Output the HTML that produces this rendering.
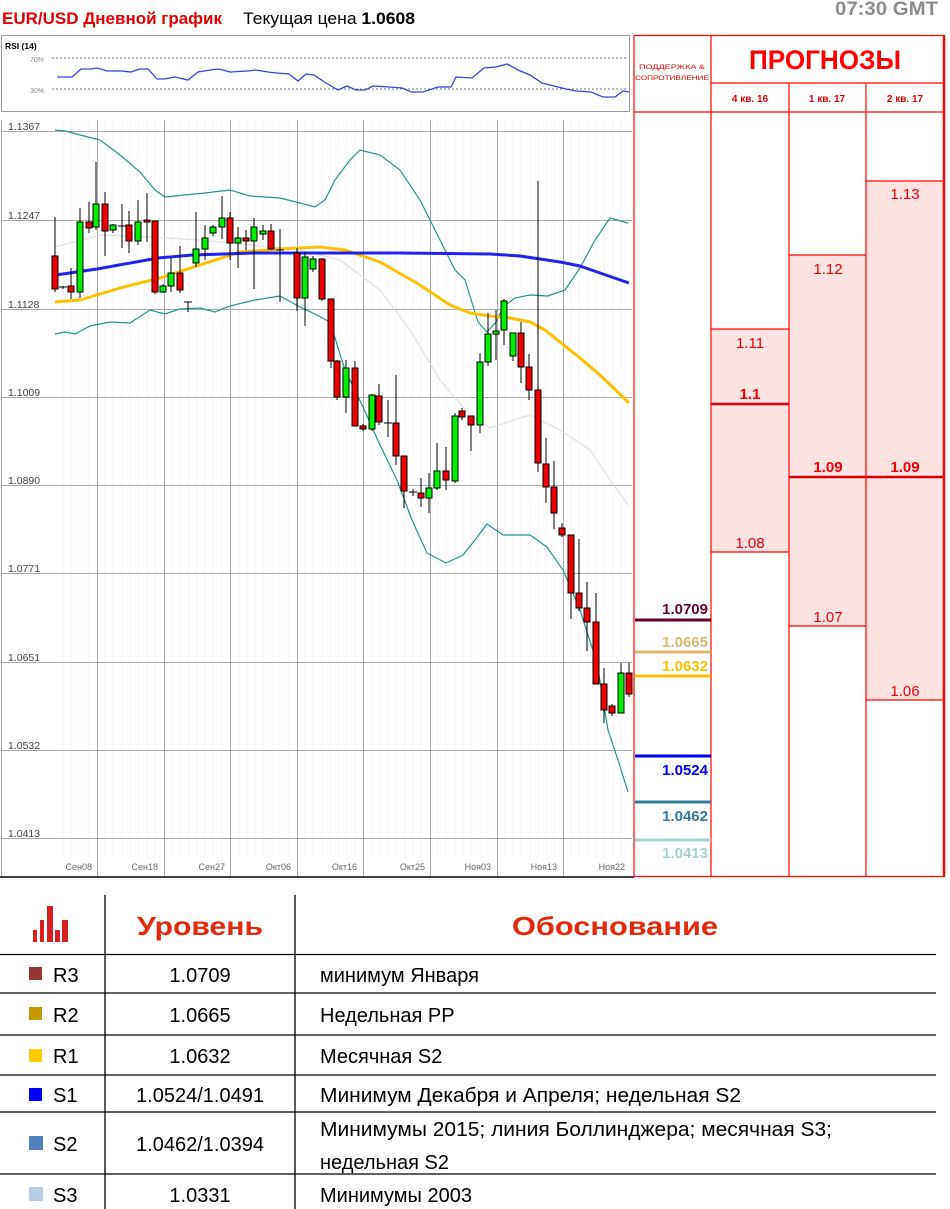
<!DOCTYPE html>
<html><head><meta charset="utf-8"><style>
html,body{margin:0;padding:0;background:#fff;width:950px;height:1209px;overflow:hidden}
svg{display:block}
text{font-family:"Liberation Sans",sans-serif}
</style></head><body>
<svg width="950" height="1209" viewBox="0 0 950 1209" xmlns="http://www.w3.org/2000/svg">
<!-- header -->
<text x="2" y="24" font-size="17" font-weight="bold" fill="#e00000" textLength="220" lengthAdjust="spacingAndGlyphs">EUR/USD Дневной график</text>
<text x="243" y="24" font-size="17" fill="#000" textLength="172" lengthAdjust="spacingAndGlyphs">Текущая цена <tspan font-weight="bold">1.0608</tspan></text>
<text x="835" y="15" font-size="19" font-weight="bold" fill="#8c8c8c" textLength="103" lengthAdjust="spacingAndGlyphs">07:30 GMT</text>

<!-- RSI -->
<rect x="1.5" y="35.5" width="628" height="76" fill="#fff" stroke="#999"/>
<text x="5" y="49" font-size="8.5" font-weight="bold" fill="#000">RSI (14)</text>
<text x="30" y="62" font-size="7" fill="#888">70%</text>
<text x="30" y="93" font-size="7" fill="#888">30%</text>
<line x1="52" y1="58" x2="628" y2="58" stroke="#777" stroke-dasharray="2,2"/>
<line x1="52" y1="89" x2="628" y2="89" stroke="#777" stroke-dasharray="2,2"/>
<polyline fill="none" stroke="#3344dd" stroke-width="1.3" points="57,77 72,77 81,69 91,69 97,68 107,71 122,71 131,72 140,69 148,69 157,79 164,79 175,77 188,80 198,72 210,70 219,69 230,72 247,71 256,70 268,72 277,73 289,74 298,81 306,74 314,75 326,83 338,90 347,86 356,90 365,90 373,86 389,87 402,88 411,92 423,92 438,87 451,87 456,77 472,78 484,68 496,67 507,64 518,70 530,75 542,83 554,86 566,89 576,91 591,92 603,97 615,97 623,91 629,92"/>

<!-- main chart grid -->
<g stroke="#f6f6f6" stroke-width="1">
<path d="M63 120V858M71 120V858M80 120V858M89 120V858M105 120V858M113 120V858M122 120V858M130 120V858M138 120V858M147 120V858M155 120V858M172 120V858M180 120V858M189 120V858M197 120V858M205 120V858M213 120V858M222 120V858M239 120V858M247 120V858M255 120V858M263 120V858M272 120V858M280 120V858M289 120V858M305 120V858M313 120V858M322 120V858M330 120V858M338 120V858M346 120V858M355 120V858M372 120V858M380 120V858M388 120V858M396 120V858M405 120V858M413 120V858M421 120V858M438 120V858M446 120V858M455 120V858M463 120V858M471 120V858M480 120V858M488 120V858M505 120V858M513 120V858M521 120V858M530 120V858M538 120V858M546 120V858M554 120V858M571 120V858M579 120V858M588 120V858M596 120V858M604 120V858M613 120V858M621 120V858"/>
</g>
<g stroke="#aaa" stroke-width="1">
<path d="M1 131.5H632M1 220.5H632M1 309.5H632M1 397.5H632M1 485.5H632M1 573.5H632M1 662.5H632M1 750.5H632M1 838.5H632"/>
<path d="M97.5 120V877M164.5 120V877M230.5 120V877M297.5 120V877M363.5 120V877M430.5 120V877M497.5 120V877M563.5 120V877"/>
<path d="M1.5 120V877"/>
</g>
<g font-size="10.5" fill="#444">
<text x="8" y="130">1.1367</text><text x="8" y="219">1.1247</text><text x="8" y="308">1.1128</text><text x="8" y="396">1.1009</text><text x="8" y="484">1.0890</text><text x="8" y="572">1.0771</text><text x="8" y="661">1.0651</text><text x="8" y="749">1.0532</text><text x="8" y="837">1.0413</text>
</g>
<g font-size="9" fill="#666" text-anchor="end">
<text x="92" y="870">Сен08</text><text x="158" y="870">Сен18</text><text x="225" y="870">Сен27</text><text x="291" y="870">Окт06</text><text x="357" y="870">Окт16</text><text x="425" y="870">Окт25</text><text x="491" y="870">Ноя03</text><text x="557" y="870">Ноя13</text><text x="625" y="870">Ноя22</text>
</g>
<line x1="0" y1="877" x2="634" y2="877" stroke="#000" stroke-width="1.5"/>

<!-- indicator lines -->
<polyline fill="none" stroke="#e2e2e2" stroke-width="1.3" points="55,247 100,235 150,237 200,240 250,245 300,250 340,260 380,290 410,330 440,380 470,415 490,428 520,418 530,415 560,430 590,450 610,480 628,505"/>
<polyline fill="none" stroke="#2a9090" stroke-width="1.2" points="55,130 65,131 80,135 100,140 120,155 140,172 155,190 165,197 205,193 230,190 250,196 280,198 300,203 315,207 325,200 335,180 350,160 360,150 380,155 400,170 420,200 440,240 455,270 465,280 478,322 487,332 496,322 503,307 515,298 530,295 548,296 565,290 580,268 595,240 610,218 628,223"/>
<polyline fill="none" stroke="#2a9090" stroke-width="1.2" points="55,334 65,332 75,334 90,326 110,322 130,323 150,310 165,314 180,309 200,308 215,312 230,306 255,300 280,296 300,307 315,314 330,322 345,370 363,407 380,445 397,480 412,520 427,553 446,563 463,555 475,540 487,524 503,535 530,535 547,547 563,570 580,610 597,663 608,730 618,760 628,792"/>
<polyline fill="none" stroke="#ffc000" stroke-width="3" stroke-linejoin="round" points="55,302 80,300 100,294 120,288 160,278 200,265 240,252 280,249 320,247 345,250 380,262 420,285 450,305 470,313 490,316 510,318 530,322 545,330 560,342 580,358 600,375 629,403"/>
<polyline fill="none" stroke="#2222ee" stroke-width="3" stroke-linejoin="round" points="56,275 97,269 158,258 193,255 253,253 340,253 400,253 490,254 520,256 560,262 580,266 600,273 629,283"/>

<!-- candles wicks -->
<path stroke="#000" stroke-width="1" fill="none" d="M55 217V292M63 286V289M71 268V299M80 208V298M89 202V233M96 162V230M105 192V256M113 224V233M122 204V248M129 211V253M138 200V245M147 193V242M155 221V294M163 284V293M171 258V292M180 246V293M188 302V312M196 212V267M205 225V260M213 225V236M222 196V239M230 212V260M238 227V268M246 230V250M254 218V289M263 225V240M271 224V250M280 229V302M297 248V311M305 252V326M313 256V272M322 258V301M331 299V368M337 360V400M346 360V413M355 361V426M363 424V431M372 394V431M379 384V425M388 400V437M396 375V465M404 456V508M413 489V496M421 478V507M429 473V513M437 443V490M446 447V490M455 413V483M462 408V420M471 416V451M480 353V433M488 313V366M496 310V360M504 299V345M513 333V361M521 322V383M529 354V400M538 181V472M546 438V503M554 461V529M562 523V537M571 535V619M579 539V611M587 582V651M596 593V684M604 668V723M612 704V716M621 663V713M629 663V697M184 302H192M409 492H417M118 226H126M59 287H67M276 250H284M384 423H392"/>
<!-- bodies -->
<g stroke="#000" stroke-width="1">
<g fill="#ee0000">
<rect x="52" y="256" width="6" height="33"/><rect x="68" y="286" width="6" height="6"/><rect x="86" y="222" width="6" height="6"/><rect x="102" y="204" width="6" height="27"/><rect x="126" y="225" width="6" height="16"/><rect x="144" y="220" width="6" height="2"/><rect x="152" y="221" width="6" height="71"/><rect x="177" y="273" width="6" height="17"/><rect x="227" y="218" width="6" height="25"/><rect x="243" y="238" width="6" height="3"/><rect x="268" y="231" width="6" height="18"/><rect x="294" y="253" width="6" height="45"/><rect x="319" y="259" width="6" height="40"/><rect x="328" y="299" width="6" height="62"/><rect x="334" y="361" width="6" height="36"/><rect x="352" y="368" width="6" height="58"/><rect x="360" y="426" width="6" height="3"/><rect x="376" y="396" width="6" height="26"/><rect x="393" y="423" width="6" height="33"/><rect x="401" y="456" width="6" height="35"/><rect x="418" y="493" width="6" height="5"/><rect x="443" y="471" width="6" height="9"/><rect x="459" y="411" width="6" height="6"/><rect x="468" y="416" width="6" height="9"/><rect x="518" y="333" width="6" height="34"/><rect x="526" y="367" width="6" height="23"/><rect x="535" y="390" width="6" height="73"/><rect x="543" y="464" width="6" height="23"/><rect x="551" y="487" width="6" height="26"/><rect x="559" y="528" width="6" height="7"/><rect x="568" y="535" width="6" height="58"/><rect x="576" y="593" width="6" height="15"/><rect x="584" y="608" width="6" height="14"/><rect x="593" y="622" width="6" height="62"/><rect x="601" y="684" width="6" height="26"/><rect x="609" y="706" width="6" height="7"/><rect x="626" y="673" width="6" height="21"/>
</g>
<g fill="#00ee00">
<rect x="77" y="222" width="6" height="70"/><rect x="93" y="204" width="6" height="23"/><rect x="110" y="225" width="6" height="5"/><rect x="135" y="222" width="6" height="19"/><rect x="160" y="286" width="6" height="6"/><rect x="168" y="273" width="6" height="13"/><rect x="193" y="249" width="6" height="14"/><rect x="202" y="238" width="6" height="11"/><rect x="210" y="227" width="6" height="6"/><rect x="219" y="218" width="6" height="9"/><rect x="235" y="238" width="6" height="5"/><rect x="251" y="227" width="6" height="14"/><rect x="260" y="231" width="6" height="3"/><rect x="302" y="257" width="6" height="41"/><rect x="310" y="259" width="6" height="10"/><rect x="343" y="368" width="6" height="29"/><rect x="369" y="395" width="6" height="34"/><rect x="426" y="488" width="6" height="10"/><rect x="434" y="471" width="6" height="17"/><rect x="452" y="416" width="6" height="65"/><rect x="477" y="362" width="6" height="63"/><rect x="485" y="334" width="6" height="28"/><rect x="493" y="331" width="6" height="3"/><rect x="501" y="301" width="6" height="29"/><rect x="510" y="333" width="6" height="23"/><rect x="618" y="673" width="6" height="40"/>
</g>
</g>

<!-- right forecast panel -->
<rect x="789" y="255" width="77" height="371" fill="#ffe3e3"/>
<rect x="711" y="329" width="78" height="223" fill="#ffe3e3"/>
<rect x="866" y="181" width="78" height="519" fill="#ffe3e3"/>
<g stroke="#ff0000" stroke-width="1.2" fill="none">
<rect x="634" y="35.5" width="310" height="841"/>
<line x1="711" y1="35" x2="711" y2="877"/>
<line x1="711" y1="83" x2="944" y2="83"/>
<line x1="634" y1="112" x2="944" y2="112"/>
<line x1="789" y1="83" x2="789" y2="877"/>
<line x1="866" y1="83" x2="866" y2="877"/>
<line x1="711" y1="329" x2="789" y2="329"/>
<line x1="711" y1="552" x2="789" y2="552"/>
<line x1="789" y1="255" x2="866" y2="255"/>
<line x1="789" y1="626" x2="866" y2="626"/>
<line x1="866" y1="181" x2="944" y2="181"/>
<line x1="866" y1="700" x2="944" y2="700"/>
</g>
<line x1="711" y1="404" x2="789" y2="404" stroke="#dd0000" stroke-width="2.5"/>
<line x1="789" y1="477" x2="944" y2="477" stroke="#dd0000" stroke-width="2.5"/>
<line x1="944" y1="35" x2="944" y2="877" stroke="#ff0000" stroke-width="2.5"/>
<text x="672" y="69" font-size="6.5" fill="#e00000" text-anchor="middle" textLength="66" lengthAdjust="spacingAndGlyphs">ПОДДЕРЖКА &amp;</text>
<text x="672" y="80" font-size="6.5" fill="#e00000" text-anchor="middle" textLength="74" lengthAdjust="spacingAndGlyphs">СОПРОТИВЛЕНИЕ</text>
<text x="749" y="69" font-size="27" font-weight="bold" fill="#ff0000" textLength="152" lengthAdjust="spacingAndGlyphs">ПРОГНОЗЫ</text>
<g font-size="10" fill="#e00000" text-anchor="middle" font-weight="bold">
<text x="750" y="102">4 кв. 16</text><text x="827" y="102">1 кв. 17</text><text x="905" y="102">2 кв. 17</text>
</g>
<g font-size="15" fill="#ee0000" text-anchor="middle">
<text x="750" y="348">1.11</text><text x="750" y="399" font-weight="bold">1.1</text><text x="750" y="548">1.08</text>
<text x="828" y="274">1.12</text><text x="828" y="472" font-weight="bold">1.09</text><text x="828" y="622">1.07</text>
<text x="905" y="199">1.13</text><text x="905" y="472" font-weight="bold">1.09</text><text x="905" y="696">1.06</text>
</g>
<!-- S/R levels -->
<g stroke-width="3">
<line x1="635" y1="620" x2="711" y2="620" stroke="#660033"/>
<line x1="635" y1="652" x2="711" y2="652" stroke="#d9b870"/>
<line x1="635" y1="676" x2="711" y2="676" stroke="#ffc000"/>
<line x1="635" y1="756" x2="711" y2="756" stroke="#0000ff"/>
<line x1="635" y1="802" x2="711" y2="802" stroke="#31799f"/>
<line x1="635" y1="840" x2="711" y2="840" stroke="#a8d0d0"/>
</g>
<g font-size="15" font-weight="bold" text-anchor="end">
<text x="708" y="614" fill="#660033">1.0709</text>
<text x="708" y="647" fill="#d9b870">1.0665</text>
<text x="708" y="671" fill="#ffc000">1.0632</text>
<text x="708" y="775" fill="#0000ff">1.0524</text>
<text x="708" y="821" fill="#31799f">1.0462</text>
<text x="708" y="858" fill="#a8d0d0">1.0413</text>
</g>

<!-- table -->
<g fill="#d92020">
<rect x="33" y="930" width="4" height="12"/><rect x="40" y="920" width="4" height="22"/><rect x="47" y="906" width="6" height="36"/><rect x="55" y="930" width="5" height="12"/><rect x="62" y="920" width="6" height="22"/>
</g>
<g stroke="#000" stroke-width="1.3">
<line x1="105" y1="895" x2="105" y2="1209"/>
<line x1="295" y1="895" x2="295" y2="1209"/>
<line x1="0" y1="954.5" x2="936" y2="954.5"/>
<line x1="0" y1="993" x2="936" y2="993"/>
<line x1="0" y1="1035" x2="936" y2="1035"/>
<line x1="0" y1="1075" x2="936" y2="1075"/>
<line x1="0" y1="1112" x2="936" y2="1112"/>
<line x1="0" y1="1174" x2="936" y2="1174"/>
</g>
<text x="200" y="935" font-size="26" font-weight="bold" fill="#e02a0a" text-anchor="middle" textLength="126" lengthAdjust="spacingAndGlyphs">Уровень</text>
<text x="615" y="935" font-size="26" font-weight="bold" fill="#e02a0a" text-anchor="middle" textLength="206" lengthAdjust="spacingAndGlyphs">Обоснование</text>
<rect x="29" y="967" width="13" height="13" fill="#943634"/>
<rect x="29" y="1007" width="13" height="13" fill="#c49a00"/>
<rect x="29" y="1049" width="13" height="13" fill="#ffcc00"/>
<rect x="29" y="1088" width="13" height="13" fill="#0000ff"/>
<rect x="29" y="1136" width="14" height="14" fill="#4f81bd"/>
<rect x="29" y="1187" width="14" height="14" fill="#b8cce4"/>
<g font-size="20" fill="#000">
<text x="53" y="982">R3</text><text x="53" y="1022">R2</text><text x="53" y="1063">R1</text><text x="53" y="1102">S1</text><text x="53" y="1151">S2</text><text x="53" y="1202">S3</text>
</g>
<g font-size="20" fill="#000" text-anchor="middle">
<text x="200" y="982">1.0709</text><text x="200" y="1022">1.0665</text><text x="200" y="1063">1.0632</text><text x="200" y="1102">1.0524/1.0491</text><text x="200" y="1151">1.0462/1.0394</text><text x="200" y="1202">1.0331</text>
</g>
<g font-size="20" fill="#000">
<text x="320" y="982">минимум Января</text>
<text x="320" y="1022">Недельная PP</text>
<text x="320" y="1063">Месячная S2</text>
<text x="320" y="1102" textLength="421" lengthAdjust="spacingAndGlyphs">Минимум Декабря и Апреля; недельная S2</text>
<text x="320" y="1136" textLength="512" lengthAdjust="spacingAndGlyphs">Минимумы 2015; линия Боллинджера; месячная S3;</text>
<text x="320" y="1169">недельная S2</text>
<text x="320" y="1202">Минимумы 2003</text>
</g>
</svg>
</body></html>
